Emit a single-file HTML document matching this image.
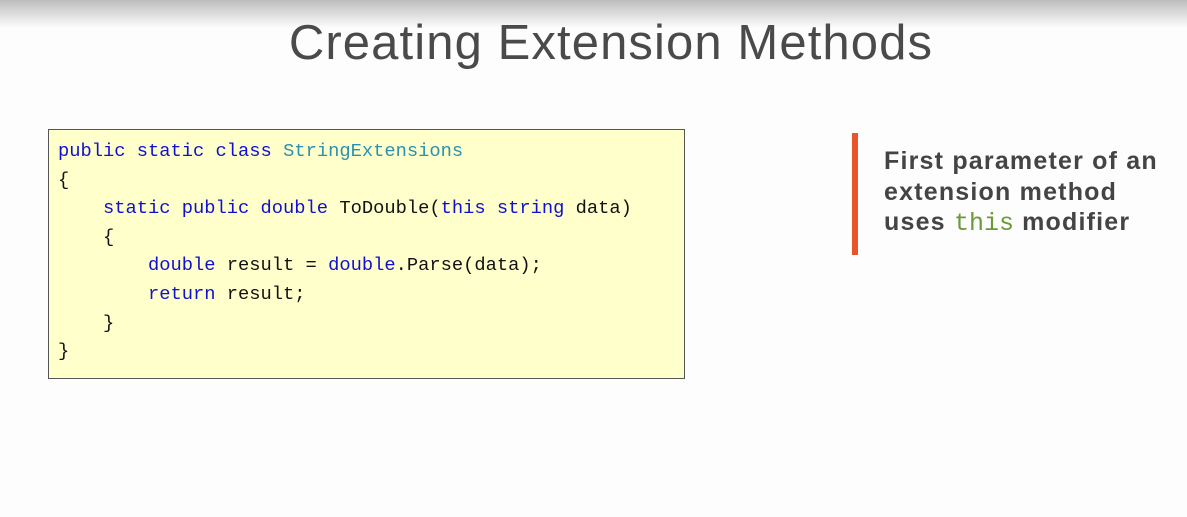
<!DOCTYPE html>
<html><head><meta charset="utf-8"><style>
html,body{margin:0;padding:0;}
body{width:1187px;height:517px;overflow:hidden;position:relative;background:#fdfdfd;font-family:"Liberation Sans",sans-serif;}
.top{position:absolute;left:0;top:0;width:1187px;height:28px;background:linear-gradient(#bdbdbd,#fdfdfd);}
.title{position:absolute;left:0;width:1222px;top:15px;text-align:center;font-size:49px;font-weight:300;color:#4a4a4a;letter-spacing:1.1px;}
.code{position:absolute;left:48px;top:129px;width:637px;height:250px;background:#ffffcc;border:1px solid #555;box-sizing:border-box;}
.code pre{margin:0;position:absolute;left:9px;top:7px;font-family:"Liberation Mono",monospace;font-size:18.75px;line-height:28.6px;color:#111;}
.k{color:#1010d0}.t{color:#2b91af}
.bar{position:absolute;left:852px;top:133px;width:6px;height:122px;background:#e8552a;}
.side{position:absolute;left:884px;top:146px;font-size:25px;font-weight:bold;line-height:30.5px;color:#444;letter-spacing:1.2px;}
.side .m{font-family:"Liberation Mono",monospace;font-weight:normal;color:#6a9a3a;font-size:25px;letter-spacing:0;}
</style></head><body>
<div class="top"></div>
<div class="title">Creating Extension Methods</div>
<div class="code"><pre><span class="k">public static class</span> <span class="t">StringExtensions</span>
{
    <span class="k">static public double</span> ToDouble(<span class="k">this string</span> data)
    {
        <span class="k">double</span> result = <span class="k">double</span>.Parse(data);
        <span class="k">return</span> result;
    }
}</pre></div>
<div class="bar"></div>
<div class="side">First parameter of an<br>extension method<br>uses <span class="m">this</span> modifier</div>
</body></html>
